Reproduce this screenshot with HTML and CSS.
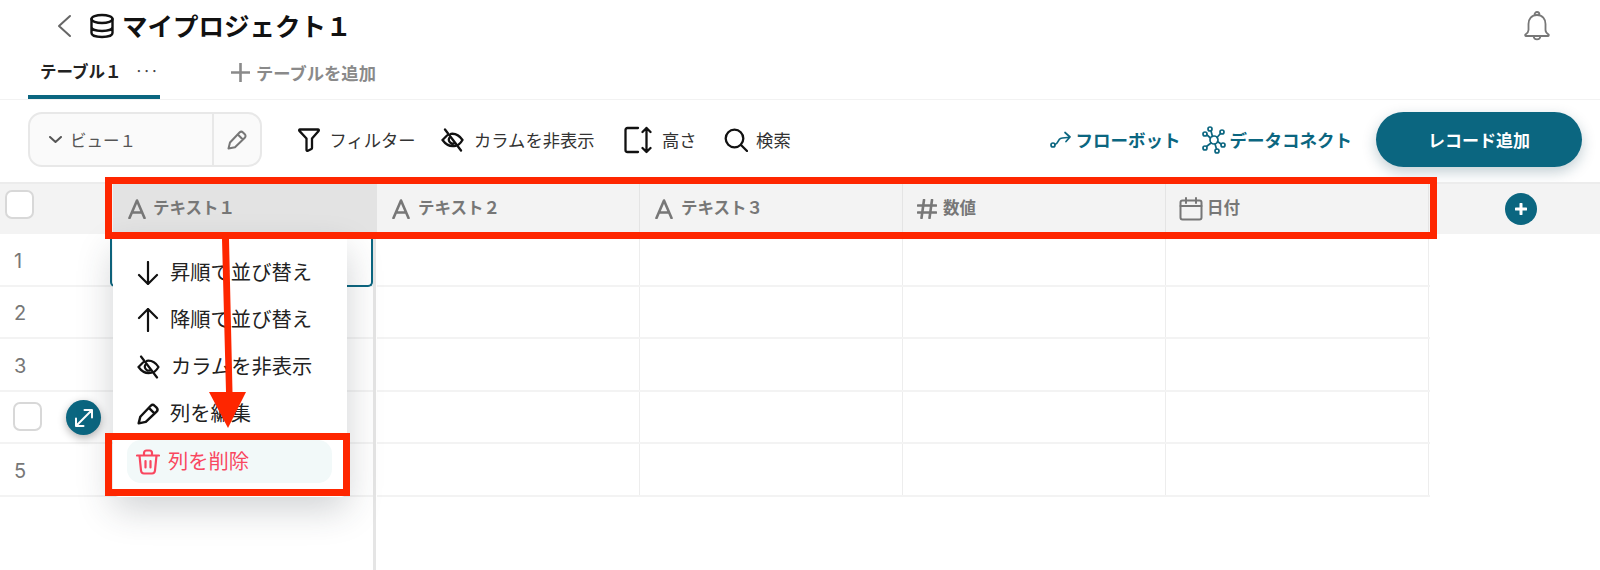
FILE: index.html
```html
<!DOCTYPE html>
<html lang="ja">
<head>
    <meta charset="utf-8">
    <title>マイプロジェクト１</title>
    <link rel="stylesheet" href="styles.css">
</head>
<body>
    <div class="title-row">
        <svg class="back-icon" width="16" height="24" viewBox="0 0 16 24"><path d="M14 2 3 12l11 10"/></svg>
        <svg class="db-icon" width="26" height="26" viewBox="0 0 26 26"><ellipse cx="13" cy="6" rx="10.500" ry="4"/><path d="M2.500 6v14c0 2.500 4.700 4 10.500 4s10.500-1.500 10.500-4V6M2.500 14c0 2.500 4.700 4 10.500 4s10.500-1.500 10.500-4"/></svg>
        <h1 class="project-name">マイプロジェクト１</h1>
        <svg class="bell-icon" width="30" height="32" viewBox="0 0 30 32"><path d="M15 5c-5.500 0-8.500 4-8.500 9v6c0 2-1.500 3.500-3 4.500-.6.5-.3 1.500.5 1.500h22c.8 0 1.100-1 .5-1.500-1.500-1-3-2.500-3-4.500v-6c0-5-3-9-8.500-9ZM12.500 5c0-4 5-4 5 0M11.500 26c.5 4.500 6.500 4.500 7 0"/></svg>
    </div>

    <div class="tabs">
        <div class="tab active">
            <span>テーブル１</span>
            <span class="tab-more">···</span>
        </div>
        <div class="tab-add">
            <svg width="19" height="19" viewBox="0 0 19 19"><path d="M9.500 0v19M0 9.500h19"/></svg>
            <span>テーブルを追加</span>
        </div>
    </div>

    <div class="toolbar">
        <div class="view-box">
            <div class="view-name">
                <svg width="13" height="7" viewBox="0 0 13 7"><path d="m1 1 5.500 5L12 1"/></svg>
                <span>ビュー１</span>
            </div>
            <div class="view-edit">
                <svg width="20" height="20" viewBox="0 0 20 20"><path d="M1.500 18.500 3 12.500 12.500 2.500c1-1 2.500-1 3.500 0l1.800 1.800c1 1 1 2.500 0 3.500L8 17.200ZM10.800 4.500l4.800 4.800"/></svg>
            </div>
        </div>
        <div class="tool">
            <svg width="22" height="24" viewBox="0 0 22 24"><path d="M2 1.500h18c.8 0 1.100.8.600 1.400L14 10.500V20c0 .5-.2.800-.6 1l-3.500 1.800c-.6.300-1.400-.1-1.400-.9V10.500L1.400 2.900C.9 2.300 1.200 1.500 2 1.500Z"/></svg>
            <span>フィルター</span>
        </div>
        <div class="tool tool-eye">
            <svg width="23" height="24" viewBox="0 0 23 24"><path d="M1.500 12 6 7.500M10 5.800c4.500-.5 8.500 1.700 11.500 6.200-1 1.800-2.300 3.200-3.700 4.300M14.500 17.800C9.500 19 5 16.800 1.500 12M8.500 9.500a4 4 0 0 0 5.500 5.500M4 1.500l16 21"/></svg>
            <span>カラムを非表示</span>
        </div>
        <div class="tool">
            <svg width="28" height="28" viewBox="0 0 28 28"><path d="M14 2H3.500C2.300 2 1.500 2.800 1.500 4v20c0 1.200.8 2 2 2H14M22.500 2v24M18.500 6l4-4 4 4M18.500 22l4 4 4-4"/></svg>
            <span>高さ</span>
        </div>
        <div class="tool tool-search">
            <svg width="24" height="24" viewBox="0 0 24 24"><circle cx="10.500" cy="10.500" r="8.800"/><path d="m17 17 6 6"/></svg>
            <span>検索</span>
        </div>
        <div class="toolbar-right">
            <div class="link">
                <svg width="22" height="18" viewBox="0 0 22 18"><circle cx="3" cy="14" r="2"/><path d="M5 13.500c3-.5 3-5 5.500-6 3-1 6-.5 9-1.500M15 1.500l5 4.500-4 4.500"/></svg>
                <span>フローボット</span>
            </div>
            <div class="link">
                <svg width="24" height="28" viewBox="0 0 24 28"><circle cx="12" cy="14" r="4"/><circle cx="8" cy="3" r="2"/><circle cx="20" cy="6" r="2"/><circle cx="3" cy="8" r="2"/><circle cx="21" cy="19" r="2"/><circle cx="3" cy="22" r="2"/><circle cx="15" cy="25" r="2"/><path d="m9 5 1.500 5.500M18.500 7.500l-3.500 4M5 9l3.500 3M19 18l-3.500-2.500M4.500 20.500l4.500-3.500M14.500 23l-1.500-5"/></svg>
                <span>データコネクト</span>
            </div>
            <button class="add-record">レコード追加</button>
        </div>
    </div>

    <div class="grid">
        <div class="frozen">
            <div class="head-row">
                <div class="head-check"><span class="checkbox"></span></div>
                <div class="head-cell hovered">
                    <svg class="type-a" width="18" height="20" viewBox="0 0 18 20"><path d="M1.500 19 9 1.500 16.500 19M4 13.500h10"/></svg>
                    <span>テキスト１</span>
                </div>
            </div>
            <div class="frozen-body">
                <div class="row">
                    <div class="num">1</div>
                    <div class="frozen-cell selected"></div>
                </div>
                <div class="row">
                    <div class="num">2</div>
                    <div class="frozen-cell"></div>
                </div>
                <div class="row">
                    <div class="num">3</div>
                    <div class="frozen-cell"></div>
                </div>
                <div class="row">
                    <div class="num num-check">
                        <span class="checkbox"></span>
                    </div>
                    <div class="frozen-cell"></div>
                </div>
                <div class="row">
                    <div class="num">5</div>
                    <div class="frozen-cell"></div>
                </div>
            </div>
        </div>

        <div class="scrolling">
            <div class="head-row">
                <div class="head-cell">
                    <svg class="type-a" width="18" height="20" viewBox="0 0 18 20"><path d="M1.500 19 9 1.500 16.500 19M4 13.500h10"/></svg>
                    <span>テキスト２</span>
                </div>
                <div class="head-cell">
                    <svg class="type-a" width="18" height="20" viewBox="0 0 18 20"><path d="M1.500 19 9 1.500 16.500 19M4 13.500h10"/></svg>
                    <span>テキスト３</span>
                </div>
                <div class="head-cell head-number">
                    <svg class="type-a" width="20" height="20" viewBox="0 0 20 20"><path d="M7 1 4.500 19M15 1l-2.500 18M1 6.500h18M1 13.500h18"/></svg>
                    <span>数値</span>
                </div>
                <div class="head-cell head-date">
                    <svg class="type-a" width="24" height="24" viewBox="0 0 24 24"><rect x="1.500" y="3.500" width="21" height="19" rx="2"/><path d="M1.500 9h21M7 1v5M17 1v5"/></svg>
                    <span>日付</span>
                </div>
                <div class="head-add">
                    <span class="add-col"><svg width="12" height="12" viewBox="0 0 12 12"><path d="M6 1v10M1 6h10"/></svg></span>
                </div>
            </div>
            <div class="row"><div class="cell"></div><div class="cell"></div><div class="cell"></div><div class="cell"></div></div>
            <div class="row"><div class="cell"></div><div class="cell"></div><div class="cell"></div><div class="cell"></div></div>
            <div class="row"><div class="cell"></div><div class="cell"></div><div class="cell"></div><div class="cell"></div></div>
            <div class="row"><div class="cell"></div><div class="cell"></div><div class="cell"></div><div class="cell"></div></div>
            <div class="row"><div class="cell"></div><div class="cell"></div><div class="cell"></div><div class="cell"></div></div>
        </div>
    </div>

    <span class="expand-btn"><svg width="22" height="22" viewBox="0 0 22 22"><path d="M3 19 19 3M11.500 3H19v7.500M3 11.500V19h7.500"/></svg></span>

    <div class="menu">
        <div class="menu-item">
            <svg width="22" height="24" viewBox="0 0 22 24"><path d="M11 1v22M2 14l9 9 9-9"/></svg>
            <span>昇順で並び替え</span>
        </div>
        <div class="menu-item">
            <svg width="22" height="24" viewBox="0 0 22 24"><path d="M11 23V1M2 10l9-9 9 9"/></svg>
            <span>降順で並び替え</span>
        </div>
        <div class="menu-item">
            <svg width="23" height="24" viewBox="0 0 23 24"><path d="M1.500 12 6 7.500M10 5.800c4.500-.5 8.500 1.700 11.500 6.200-1 1.800-2.300 3.200-3.700 4.300M14.500 17.800C9.500 19 5 16.800 1.500 12M8.500 9.500a4 4 0 0 0 5.500 5.500M4 1.500l16 21"/></svg>
            <span>カラムを非表示</span>
        </div>
        <div class="menu-item">
            <svg width="22" height="22" viewBox="0 0 20 20"><path d="M1.500 18.500 3 12.500 12.500 2.500c1-1 2.500-1 3.500 0l1.800 1.800c1 1 1 2.500 0 3.500L8 17.200ZM10.800 4.500l4.800 4.800"/></svg>
            <span>列を編集</span>
        </div>
        <div class="menu-item danger">
            <svg width="24" height="26" viewBox="0 0 24 26"><path d="M1 6.500h22M8 6.500V4c0-1.500 1-2.500 2.500-2.500h3C15 1.500 16 2.500 16 4v2.500M3.500 6.500 5 21.500c.2 1.800 1.300 3 3 3h8c1.700 0 2.800-1.200 3-3l1.500-15M9.500 12v6.500M14.500 12v6.500"/></svg>
            <span>列を削除</span>
        </div>
    </div>

    <div class="red-box header-box"></div>
    <div class="red-box delete-box"></div>
    <svg class="red-arrow" width="40" height="192" viewBox="0 0 40 192"><path d="M16 0h7l3.500 153H40l-18 36L3 153h17Z"/></svg>
</body>
</html>
```

FILE: styles.css
```css
* { box-sizing: border-box; }
body {
    margin: 0;
    width: 1600px;
    height: 570px;
    overflow: hidden;
    position: relative;
    background: white;
    font-family: Inter, "Noto Sans CJK JP", sans-serif;
    color: #222;
}
svg {
    fill: none;
    stroke: currentColor;
    stroke-width: 2;
    stroke-linecap: round;
    stroke-linejoin: round;
    flex: none;
}

/* title */
.title-row {
    height: 53px;
    display: flex;
    align-items: center;
    padding: 0 0 2px 56px;
}
.back-icon { color: #666; }
.db-icon { color: #111; margin-left: 17px; stroke-width: 2.4; }
.project-name {
    margin: 0 0 2px 7px;
    font-size: 25.500px;
    font-weight: 700;
    color: #111;
    flex: 1;
}
.bell-icon { color: #777; margin-right: 48px; stroke-width: 1.800; }

/* tabs */
.tabs {
    height: 47px;
    display: flex;
    padding-left: 28px;
    border-bottom: 1px solid #f2f2f2;
}
.tab {
    width: 132px;
    height: 46px;
    padding: 0 0 6px 12px;
    display: flex;
    align-items: center;
    font-size: 16.500px;
    font-weight: 700;
    color: #222;
    white-space: nowrap;
    border-bottom: 4px solid #0b6680;
    border-radius: 4px 4px 0 0;
}
.tab-more {
    margin-left: 15px;
    font-weight: 400;
    letter-spacing: 3px;
    color: #444;
}
.tab-add {
    margin-left: 71px;
    padding-bottom: 8px;
    display: flex;
    align-items: center;
    gap: 6px;
    font-size: 17.300px;
    font-weight: 700;
    color: #8a8a8a;
}
.tab-add svg { stroke-width: 2.600; stroke-linecap: butt; }

/* toolbar */
.toolbar {
    height: 82px;
    padding: 12px 18px 15px 28px;
    display: flex;
    align-items: center;
    gap: 29.500px;
}
.view-box {
    width: 234px;
    height: 55px;
    display: flex;
    background: #fafafa;
    border: 2px solid #e8e8e8;
    border-radius: 14px;
    margin-right: 6px;
}
.view-name {
    flex: 1;
    display: flex;
    align-items: center;
    gap: 8px;
    padding-left: 19px;
    font-size: 16.500px;
    color: #555;
    border-right: 2px solid #e8e8e8;
}
.view-edit {
    width: 46px;
    display: flex;
    align-items: center;
    justify-content: center;
    color: #777;
}
.tool {
    display: flex;
    align-items: center;
    gap: 10px;
    font-size: 17.300px;
    color: #333;
}
.tool svg { color: #111; stroke-width: 2.300; }
.tool-eye { margin-left: -4px; }
.tool-search { margin-left: -2px; gap: 8px; }
.toolbar-right {
    margin-left: auto;
    display: flex;
    align-items: center;
    gap: 21px;
}
.link {
    display: flex;
    align-items: center;
    gap: 4px;
    font-size: 17.500px;
    font-weight: 700;
    color: #0b6680;
}
.link svg { stroke-width: 1.700; }
.add-record {
    width: 206px;
    height: 55px;
    margin-left: 3px;
    border: none;
    border-radius: 28px;
    background: #0b6680;
    color: white;
    font-family: inherit;
    font-size: 17px;
    font-weight: 700;
    box-shadow: 0 5px 14px rgba(11, 60, 80, 0.25);
}

/* grid */
.grid {
    display: flex;
    height: 388px;
}
.frozen { width: 377px; flex: none; display: flex; flex-direction: column; }
.frozen-body {
    flex: 1;
    width: 376px;
    border-right: 3px solid #e5e5e5;
}
.scrolling { flex: 1; }
.head-row {
    height: 52px;
    display: flex;
    background: #f3f3f3;
    border-top: 2px solid #ececec;
}
.head-check { width: 113px; padding: 6px 0 0 5px; }
.checkbox {
    display: block;
    width: 29px;
    height: 29px;
    background: white;
    border: 2px solid #d8d8d8;
    border-radius: 7px;
}
.head-cell {
    width: 263px;
    padding-left: 15px;
    display: flex;
    align-items: center;
    gap: 8px;
    font-size: 16.500px;
    font-weight: 700;
    color: #777;
    border-right: 1px solid #e4e4e4;
}
.head-cell span { padding-bottom: 4px; }
.head-cell.hovered { width: 264px; gap: 7px; background: #e3e3e3; border-right: none; }
.head-cell svg { color: #777; stroke-width: 2.600; }
.head-number { padding-left: 14px; gap: 6px; }
.head-date { padding-left: 13px; gap: 4px; }
.head-date svg { stroke-width: 2; }
.head-add {
    flex: 1;
    padding-left: 76px;
    display: flex;
    align-items: center;
}
.add-col {
    width: 32px;
    height: 32px;
    display: flex;
    align-items: center;
    justify-content: center;
    border-radius: 50%;
    background: #0b6680;
    color: white;
}
.add-col svg { stroke-width: 3; }
.row {
    height: 52.500px;
    display: flex;
    border-bottom: 2px solid #f3f3f3;
}
.scrolling .row { width: 1053px; }
.num {
    width: 110px;
    padding: 3px 0 0 14px;
    display: flex;
    align-items: center;
    font-size: 20px;
    color: #777;
}
.num-check { padding: 0 0 0 13px; }
.frozen-cell { flex: 1; }
.frozen-cell.selected {
    height: 53px;
    border: 2px solid #0b6680;
    border-top: none;
    border-radius: 0 0 5px 5px;
}
.cell {
    width: 263px;
    border-right: 1px solid #ededed;
}

/* row 4 hover button */
.expand-btn {
    position: absolute;
    left: 66px;
    top: 400px;
    width: 35px;
    height: 35px;
    display: flex;
    align-items: center;
    justify-content: center;
    border-radius: 50%;
    background: #0b6680;
    color: white;
    box-shadow: 0 3px 8px rgba(0, 0, 0, 0.3);
}

/* column menu */
.menu {
    position: absolute;
    left: 113px;
    top: 239px;
    width: 234px;
    height: 258px;
    padding: 10px 14px 0;
    background: white;
    border-radius: 0 0 6px 6px;
    box-shadow: 0 12px 36px rgba(40, 50, 60, 0.22);
}
.menu-item {
    height: 47px;
    display: flex;
    align-items: center;
    gap: 11px;
    padding-left: 10px;
    font-size: 20.300px;
    color: #222;
}
.menu-item span { padding-bottom: 4px; }
.menu-item svg { color: #111; stroke-width: 2.200; }
.menu-item.danger {
    height: 43px;
    margin-top: 3px;
    padding-left: 9px;
    width: 205px;
    gap: 8px;
    color: #f9475f;
    background: #f2f9f9;
    border-radius: 14px;
}
.menu-item.danger svg { color: #f9475f; }

/* red annotations */
.red-box {
    position: absolute;
    border: 7px solid #fe2600;
}
.header-box { left: 105px; top: 177px; width: 1332px; height: 62px; }
.delete-box { left: 105px; top: 433px; width: 245px; height: 63px; }
.red-arrow { position: absolute; left: 206px; top: 239px; }
.red-arrow path { fill: #fe2600; stroke: none; }
```
